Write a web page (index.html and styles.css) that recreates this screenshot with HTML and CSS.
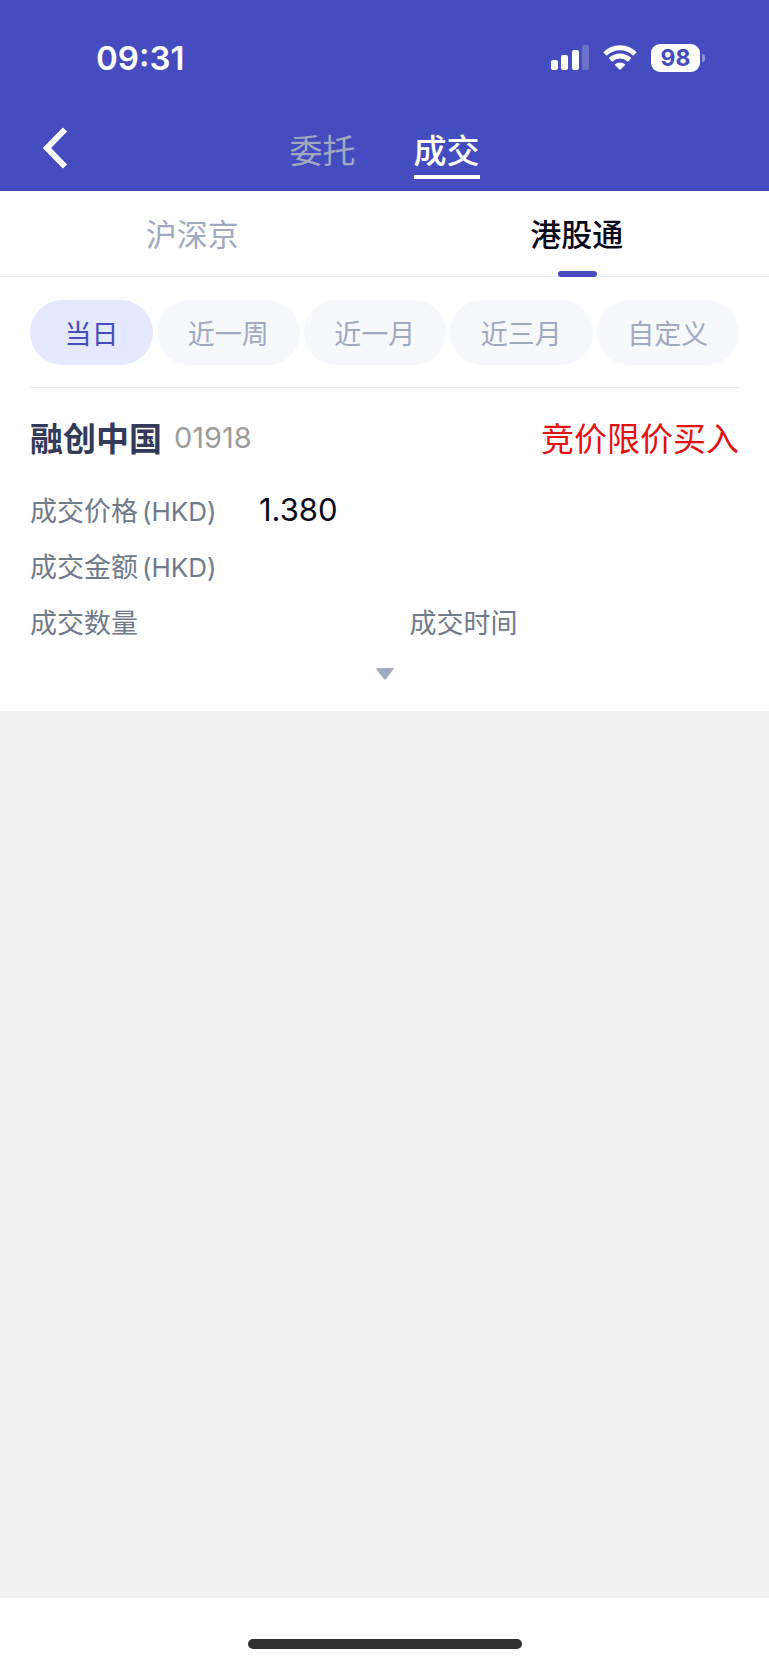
FILE: index.html
```html
<!DOCTYPE html>
<html lang="zh-CN">
  <head>
    <meta charset="UTF-8">
    <meta name="viewport" content="width=device-width, initial-scale=1.0">
    <title>成交</title>
    <link rel="stylesheet" href="styles.css">
  </head>
  <body>
    <header class="header">
      <div class="status-bar">
        <span class="time">09:31</span>
        <div class="status-icons">
          <svg class="signal" width="38" height="25" viewBox="0 0 38 25" fill="#fff">
            <rect x="0" y="15" width="7" height="10" rx="2"/>
            <rect x="10" y="10" width="7" height="15" rx="2"/>
            <rect x="21" y="5" width="7" height="20" rx="2"/>
            <rect x="31" y="0" width="7" height="25" rx="2" opacity="0.22"/>
          </svg>
          <svg class="wifi" width="34" height="25" viewBox="0 0 34 25">
            <g fill="none" stroke="#fff" stroke-width="5">
              <path d="M2 9C10.5 0.7 23.5 0.7 32 9"/>
              <path d="M7.4 14.8C13 9.6 21 9.6 26.6 14.8"/>
            </g>
            <path d="M17 25L11.6 19.8C14.6 16.8 19.4 16.8 22.4 19.8Z" fill="#fff"/>
          </svg>
          <div class="battery">
            <span class="battery-level">98</span>
            <span class="battery-tip"></span>
          </div>
        </div>
      </div>
      <nav class="nav-bar">
        <button class="back" aria-label="返回">
          <svg width="26" height="42" viewBox="0 0 26 42" fill="none" stroke="#fff" stroke-width="6">
            <path d="M23 2.5L5 21L23 39.5"/>
          </svg>
        </button>
        <div class="nav-tabs">
          <button class="nav-tab">委托</button>
          <button class="nav-tab nav-tab-active">成交</button>
        </div>
      </nav>
    </header>

    <main class="content">
      <div class="market-tabs">
        <button class="market-tab">沪深京</button>
        <button class="market-tab market-tab-active">港股通</button>
      </div>

      <div class="filters">
        <button class="chip chip-active">当日</button>
        <button class="chip">近一周</button>
        <button class="chip">近一月</button>
        <button class="chip">近三月</button>
        <button class="chip">自定义</button>
      </div>

      <section class="deal">
        <div class="deal-head">
          <h2 class="stock-name">融创中国</h2>
          <span class="stock-code">01918</span>
          <span class="deal-type">竞价限价买入</span>
        </div>
        <dl class="deal-info">
          <div class="info-row info-wide">
            <dt>成交价格<span class="unit">(HKD)</span></dt>
            <dd>1.380</dd>
          </div>
          <div class="info-row info-wide">
            <dt>成交金额<span class="unit">(HKD)</span></dt>
            <dd></dd>
          </div>
          <div class="info-row">
            <dt>成交数量</dt>
            <dd></dd>
          </div>
          <div class="info-row">
            <dt>成交时间</dt>
            <dd></dd>
          </div>
        </dl>
        <button class="expand" aria-label="展开">
          <svg width="18" height="12" viewBox="0 0 18 12">
            <path d="M0.8 0H17.2Q18 0.4 17.5 1.2L10 11Q9 12 8 11L0.5 1.2Q0 0.4 0.8 0Z" fill="#a0aac0"/>
          </svg>
        </button>
      </section>
    </main>

    <footer class="home-area">
      <div class="home-bar"></div>
    </footer>
  </body>
</html>
```
FILE: styles.css
```css
* {
  box-sizing: border-box;
}
body {
  margin: 0;
  min-height: 100vh;
  display: flex;
  flex-direction: column;
  background-color: #f1f1f1;
  font-family: Inter, "Noto Sans CJK SC", sans-serif;
}
button {
  margin: 0;
  padding: 0;
  border: none;
  background: none;
  font-family: inherit;
  cursor: pointer;
}
svg {
  display: block;
}

/* header */
.header {
  background-color: #444cbf;
  color: white;
}
.status-bar {
  display: flex;
  justify-content: space-between;
  align-items: center;
  height: 115px;
  padding: 0 64px 0 96px;
}
.time {
  font-size: 33px;
  font-weight: 600;
}
.status-icons {
  display: flex;
  align-items: center;
}
.wifi {
  margin: 0 14px;
}
.battery {
  display: flex;
  align-items: center;
  gap: 2px;
}
.battery-level {
  width: 49px;
  height: 28px;
  border-radius: 9px;
  background-color: white;
  color: #444cbf;
  font-size: 23px;
  font-weight: 700;
  line-height: 28px;
  text-align: center;
}
.battery-tip {
  width: 3px;
  height: 8px;
  border-radius: 0 3px 3px 0;
  background-color: #8f94d9;
}
.nav-bar {
  display: grid;
  grid-template-columns: 1fr auto 1fr;
  height: 76px;
  padding: 0 42px;
}
.back {
  justify-self: start;
  align-self: start;
  padding-top: 12px;
}
.nav-tabs {
  display: flex;
  align-items: flex-start;
  gap: 58px;
}
.nav-tab {
  height: 64px;
  padding-top: 10px;
  padding-bottom: 4px;
  border-bottom: 4px solid transparent;
  color: #a0a9bf;
  font-size: 33px;
}
.nav-tab-active {
  border-color: white;
  color: white;
  font-weight: 500;
}

/* market tabs */
.content {
  background-color: white;
}
.market-tabs {
  display: grid;
  grid-template-columns: 1fr 1fr;
  height: 86px;
  border-bottom: 1px solid #e6ecf4;
}
.market-tab {
  position: relative;
  padding-bottom: 2px;
  color: #a0aac0;
  font-size: 31px;
}
.market-tab-active {
  color: #080818;
  font-weight: 500;
}
.market-tab-active::after {
  content: "";
  position: absolute;
  left: 50%;
  bottom: -1px;
  width: 39px;
  height: 6px;
  margin-left: -19px;
  border-radius: 3px;
  background-color: #444cbf;
}

/* date filters */
.filters {
  display: grid;
  grid-template-columns: 123px repeat(4, 1fr);
  gap: 4px;
  margin: 0 30px;
  padding: 23px 0 22px;
  border-bottom: 1px solid #e8e8e8;
}
.chip {
  height: 65px;
  border-radius: 33px;
  background-color: #f6f8fc;
  color: #a0aac0;
  font-size: 27px;
}
.chip-active {
  background-color: #e4e9ff;
  color: #444cbf;
}

/* deal */
.deal {
  padding: 24px 30px 0;
}
.deal-head {
  display: flex;
  align-items: center;
  height: 50px;
}
.stock-name {
  margin: 0 12px 0 0;
  color: #333a5a;
  font-size: 33px;
  font-weight: 700;
}
.stock-code {
  color: #9c9c9c;
  font-size: 29px;
}
.deal-type {
  margin-left: auto;
  color: #e01212;
  font-size: 33px;
}
.deal-info {
  display: grid;
  grid-template-columns: 1fr 1fr;
  column-gap: 50px;
  margin: 19px 0 0;
}
.info-row {
  display: flex;
  align-items: center;
  height: 56px;
}
.info-wide {
  grid-column: span 2;
}
.info-row dt {
  width: 229px;
  color: #717a8a;
  font-size: 27px;
}
.unit {
  margin-left: 4px;
  font-size: 26px;
}
.info-row dd {
  margin: 0;
  color: #080818;
  font-size: 31px;
}
.expand {
  display: block;
  margin: 0 auto;
  padding: 19px 20px 31px;
}

/* home indicator */
.home-area {
  height: 67px;
  margin-top: auto;
  padding-top: 41px;
  background-color: white;
}
.home-bar {
  width: 274px;
  height: 10px;
  margin: 0 auto;
  border-radius: 5px;
  background-color: #303030;
}
```
